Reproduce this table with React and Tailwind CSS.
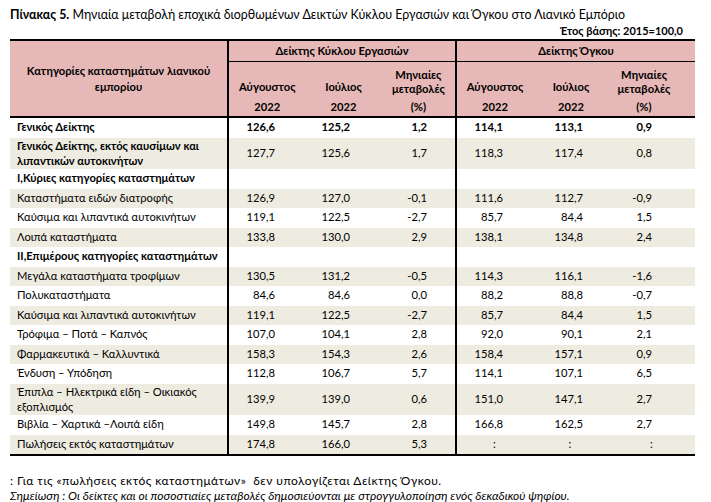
const rows = [
  { label: 'Γενικός Δείκτης', vals: ['126,6', '125,2', '1,2', '114,1', '113,1', '0,9'], bold: true, boldVals: true },
  { label: <>Γενικός Δείκτης, εκτός καυσίμων και<br />λιπαντικών αυτοκινήτων</>, vals: ['127,7', '125,6', '1,7', '118,3', '117,4', '0,8'], bold: true, tall: true, shade: true },
  { label: 'I,Κύριες κατηγορίες καταστημάτων', bold: true },
  { label: 'Καταστήματα ειδών διατροφής', vals: ['126,9', '127,0', '-0,1', '111,6', '112,7', '-0,9'], shade: true },
  { label: 'Καύσιμα και λιπαντικά αυτοκινήτων', vals: ['119,1', '122,5', '-2,7', '85,7', '84,4', '1,5'] },
  { label: 'Λοιπά καταστήματα', vals: ['133,8', '130,0', '2,9', '138,1', '134,8', '2,4'], shade: true },
  { label: 'II,Επιμέρους κατηγορίες καταστημάτων', bold: true },
  { label: 'Μεγάλα καταστήματα τροφίμων', vals: ['130,5', '131,2', '-0,5', '114,3', '116,1', '-1,6'], shade: true },
  { label: 'Πολυκαταστήματα', vals: ['84,6', '84,6', '0,0', '88,2', '88,8', '-0,7'] },
  { label: 'Καύσιμα και λιπαντικά αυτοκινήτων', vals: ['119,1', '122,5', '-2,7', '85,7', '84,4', '1,5'], shade: true },
  { label: 'Τρόφιμα – Ποτά – Καπνός', vals: ['107,0', '104,1', '2,8', '92,0', '90,1', '2,1'] },
  { label: 'Φαρμακευτικά – Καλλυντικά', vals: ['158,3', '154,3', '2,6', '158,4', '157,1', '0,9'], shade: true },
  { label: 'Ένδυση – Υπόδηση', vals: ['112,8', '106,7', '5,7', '114,1', '107,1', '6,5'] },
  { label: <>Έπιπλα – Ηλεκτρικά είδη – Οικιακός<br />εξοπλισμός</>, vals: ['139,9', '139,0', '0,6', '151,0', '147,1', '2,7'], tall: true, shade: true },
  { label: 'Βιβλία – Χαρτικά –Λοιπά είδη', vals: ['149,8', '145,7', '2,8', '166,8', '162,5', '2,7'] },
  { label: 'Πωλήσεις εκτός καταστημάτων', vals: ['174,8', '166,0', '5,3', ':', ':', ':'], shade: true },
];

// column widths + right padding for the numbers
const cols = [
  'w-[77px] pr-[31px]',
  'w-[77px] pr-[33px]',
  'w-[74px] pr-[28px] border-r-2 border-black',
  'w-[75px] pr-[29px]',
  'w-[76px] pr-[25px]',
  'w-[87px] pr-[43px]',
];
const colsCenter = [
  'w-[77px]',
  'w-[77px]',
  'w-[74px] border-r-2 border-black',
  'w-[75px]',
  'w-[76px]',
  'w-[87px]',
];

function GroupHeader({ title, widths, last }) {
  return (
    <div className={`flex flex-col ${last ? 'w-[238px]' : 'w-[228px] border-r-2 border-black'}`}>
      <div className="h-[21px] border-b border-black flex items-center justify-center">{title}</div>
      <div className="flex h-[36px]">
        <div className="w-[77px] flex items-end justify-center pb-[2px]">Αύγουστος</div>
        <div className="w-[77px] flex items-end justify-center pb-[2px]">Ιούλιος</div>
        <div className={`${widths} flex items-end justify-center text-center leading-[14px] pb-[2px]`}>
          Μηνιαίες<br />μεταβολές
        </div>
      </div>
      <div className="flex h-[18px]">
        <div className="w-[77px] flex items-center justify-center">2022</div>
        <div className="w-[77px] flex items-center justify-center">2022</div>
        <div className={`${widths} flex items-center justify-center`}>(%)</div>
      </div>
    </div>
  );
}

export default function App() {
  return (
    <div className="w-[711px] h-[502px] bg-white pl-[10px] pt-[8px] text-black font-['Lato','Noto_Sans',sans-serif]">
      <p className="text-[12.4px] leading-[14px]">
        <span className="font-bold">Πίνακας 5.</span> Μηνιαία μεταβολή εποχικά διορθωμένων Δεικτών Κύκλου Εργασιών και Όγκου στο Λιανικό Εμπόριο
      </p>
      <p className="w-[673px] text-right text-[11px] leading-[17px] font-bold">Έτος βάσης: 2015=100,0</p>

      <div className="w-[685px] text-[11.2px] border-t-2 border-b-2 border-black">
        {/* header */}
        <div className="flex bg-[#e6b8b7] font-bold border-b-2 border-black">
          <div className="w-[219px] border-r-2 border-black flex items-center justify-center text-center leading-[16px]">
            Κατηγορίες καταστημάτων λιανικού<br />εμπορίου
          </div>
          <GroupHeader title="Δείκτης Κύκλου Εργασιών" widths="w-[74px]" />
          <GroupHeader title="Δείκτης Όγκου" widths="w-[87px] pr-[16px]" last />
        </div>

        {/* body */}
        {rows.map((r, i) => (
          <div
            key={i}
            className={`flex ${r.tall ? 'h-[31.5px]' : 'h-[19.5px]'} ${r.shade ? 'bg-[#eeece1]' : ''}`}
          >
            <div
              className={`w-[219px] border-r-2 border-black pl-[7px] flex items-center ${r.tall ? 'leading-[15px]' : ''} ${r.bold ? 'font-bold' : ''}`}
            >
              <span>{r.label}</span>
            </div>
            {(r.vals || ['', '', '', '', '', '']).map((v, j) => (
              <div
                key={j}
                className={`${v === ':' ? colsCenter[j] + ' justify-center' : cols[j] + ' justify-end'} flex items-center ${r.boldVals ? 'font-bold' : ''}`}
              >
                {v}
              </div>
            ))}
          </div>
        ))}
      </div>

      <div className="mt-[17px] text-[12px] leading-[15px]">
        <p className="tracking-[0.45px]">: Για τις «πωλήσεις εκτός καταστημάτων»&nbsp; δεν υπολογίζεται Δείκτης Όγκου.</p>
        <p className="italic">Σημείωση : Οι δείκτες και οι ποσοστιαίες μεταβολές δημοσιεύονται με στρογγυλοποίηση ενός δεκαδικού ψηφίου.</p>
      </div>
    </div>
  );
}
